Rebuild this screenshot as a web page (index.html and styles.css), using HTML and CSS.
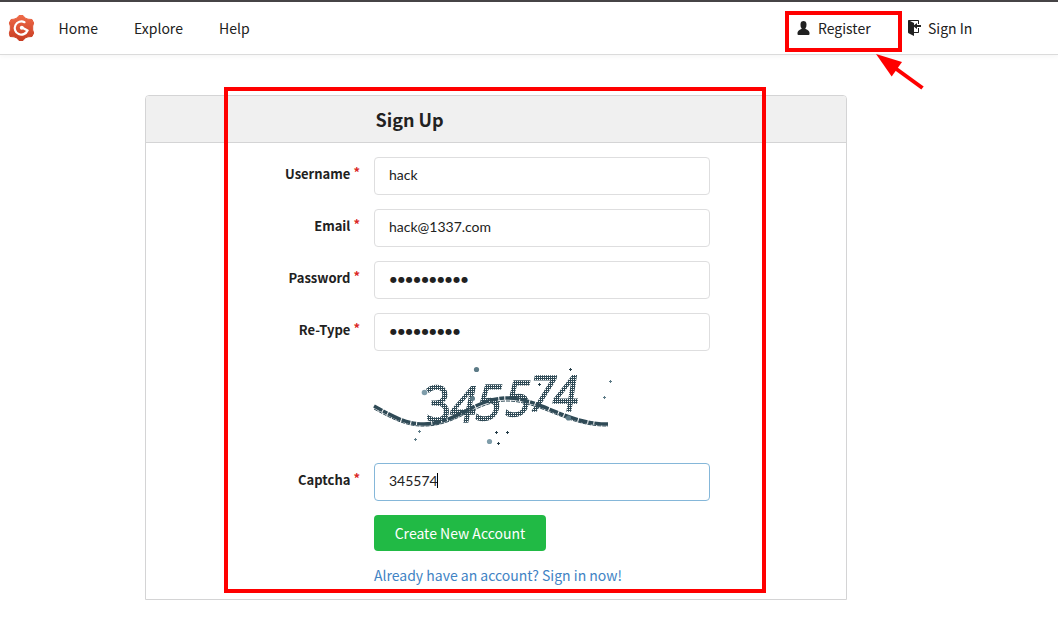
FILE: index.html
```html
<!DOCTYPE html>
<html lang="en">
<head>
<meta charset="utf-8">
<title>Sign Up</title>
<link rel="stylesheet" href="styles.css">
</head>
<body>
<nav class="navbar">
  <a class="brand">
    <svg width="27" height="28" viewBox="0 0 27 28">
      <defs><linearGradient id="g" x1="0" y1="0" x2="0" y2="1"><stop offset="0" stop-color="#ee6a48"/><stop offset="1" stop-color="#c83c22"/></linearGradient></defs>
      <path fill="url(#g)" stroke="url(#g)" stroke-linejoin="round" d="M11 1.500h4l2 2.500 3 1.200 4 .300 1.700 3.500-1 3v4l1 3-1.700 3.500-4 .300-3 1.200-2 2.500h-4l-2-2.500-3-1.200-4-.300L1.300 19l1-3v-4l-1-3L3 5.500l3-.300L9 4z"/>
      <path fill="none" stroke="#fff" stroke-width="2.200" stroke-linecap="round" d="M16.500 8.200a6.600 6.600 0 1 0 3 8.300l-5.500-3"/>
      <circle cx="13.800" cy="13.700" r="2" fill="#fff"/>
    </svg>
  </a>
  <a class="link home">Home</a>
  <a class="link explore">Explore</a>
  <a class="link">Help</a>
  <div class="account">
    <a class="link register"><svg class="icon" width="13" height="16" viewBox="0 0 12 16"><path d="M12 14.002a.998.998 0 01-.998.998H1.001A1 1 0 010 13.999V13c0-2.633 4-4 4-4s.229-.409 0-1c-.841-.62-.944-1.590-1-4 .173-2.413 1.867-3 3-3s2.827.586 3 3c-.056 2.410-.159 3.380-1 4-.229.590 0 1 0 1s4 1.367 4 4v1.002z"/></svg>Register</a>
    <a class="link"><svg class="icon" width="14" height="16" viewBox="0 0 14 16"><path d="M7 6.750V12h4V8h1v4c0 .550-.450 1-1 1H7v3l-5.450-2.720c-.330-.170-.550-.520-.550-.910V1c0-.550.450-1 1-1h9c.550 0 1 .450 1 1v3h-1V1H3l4 2v2.250L10 3v2h4v2h-4v2L7 6.750z"/></svg>Sign In</a>
  </div>
</nav>
<main class="card">
  <h1 class="title">Sign Up</h1>
  <form class="form">
    <label class="label">Username<span class="req">*</span></label><div class="input">hack</div>
    <label class="label">Email<span class="req">*</span></label><div class="input">hack@1337.com</div>
    <label class="label">Password<span class="req">*</span></label><div class="input dots">●●●●●●●●●●</div>
    <label class="label">Re-Type<span class="req">*</span></label><div class="input dots">●●●●●●●●●</div>
    <svg class="captcha" width="240" height="84" viewBox="374 365 240 84">
      <defs>
        <pattern id="mesh" width="2" height="2" patternUnits="userSpaceOnUse"><path fill="#fff" shape-rendering="crispEdges" d="M0 0h2v1H0zM0 1h1v1H0z"/></pattern>
        <mask id="holes" maskUnits="userSpaceOnUse" x="374" y="365" width="240" height="84"><rect x="374" y="365" width="240" height="84" fill="url(#mesh)"/></mask>
      </defs>
      <g class="digits" mask="url(#holes)">
        <text transform="translate(426 421) skewX(2) scale(.9 1)">3</text>
        <text transform="translate(448 422) skewX(-12) scale(.9 1)">4</text>
        <text transform="translate(473 420) skewX(-13) scale(.9 1)">5</text>
        <text transform="translate(503 416) skewX(-10) scale(.9 1)">5</text>
        <text transform="translate(526 411) skewX(-12) scale(.9 1)">7</text>
        <text transform="translate(551 411) skewX(-9) scale(.9 1)">4</text>
      </g>
      <g fill="none" stroke="#2f4a56">
        <path stroke-width="3.500" stroke-dasharray="9 1 5 1 14 1" d="M374 406C394 417 406 424 424 424C456 424 475 398 507 398C540 398 565 424 608 424"/>
        <path stroke-width="1" stroke-dasharray="4 1" d="M374 409C394 420 408 427 426 426C458 425 477 401 507 401C540 401 568 427 608 426"/>
      </g>
      <g fill="#5d7b87">
        <circle cx="476.500" cy="369.500" r="2.600"/><circle cx="568.500" cy="418" r="2.600"/><circle cx="472.500" cy="398.500" r="2.500"/>
        <circle cx="424.500" cy="392.500" r="2.800" fill="#7f9daa"/><circle cx="489.500" cy="441.500" r="2.600" fill="#7f9daa"/>
      </g>
      <g shape-rendering="crispEdges" stroke="#5d7b87">
        <path d="M418 431.500h3M419.500 430v3M414 439.500h3M415.500 438v3M609 381.500h3M610.500 380v3M603 397.500h3M604.500 396v3"/>
        <path stroke="#243c47" d="M495 432.500h3M496.500 431v3M506 432.500h3M507.500 431v3M497 443.500h3M498.500 442v3M569 369.500h3M570.500 368v3M538 384.500h3M539.500 383v3"/>
      </g>
    </svg>
    <label class="label">Captcha<span class="req">*</span></label><div class="input focus">345574<span class="caret"></span></div>
    <a class="button">Create New Account</a>
    <a class="signin">Already have an account? Sign in now!</a>
  </form>
</main>
<div class="mark mark-register"></div>
<div class="mark mark-form"></div>
<svg class="arrow" width="50" height="38" viewBox="875 52 50 38"><path fill="#f00" d="M876 54L902 62L891.700 76.500Z"/><path stroke="#f00" stroke-width="4" d="M895 68L922.500 88"/></svg>
</body>
</html>
```
FILE: styles.css
```css
* { box-sizing: border-box; }
body {
  margin: 0;
  height: 633px;
  overflow: hidden;
  background: #fff;
  color: #212121;
  font: 14px/20px "Noto Sans CJK SC", "Noto Sans", sans-serif;
}
.navbar {
  display: flex;
  align-items: center;
  height: 55px;
  padding-left: 8px;
  border-top: 2px solid #464446;
  border-bottom: 1px solid #dbdbdb;
  box-shadow: 0 2px 5px rgba(0, 0, 0, .04);
}
.brand { display: flex; width: 50.600px; }
.link { display: flex; align-items: center; white-space: nowrap; }
.home { width: 75.400px; }
.explore { width: 85px; }
.account { display: flex; margin-left: auto; width: 261px; }
.register { width: 110px; }
.icon { fill: #212121; margin-right: 8px; }
.account .link:last-child .icon { margin-right: 7px; }
.card {
  width: 702px;
  height: 505px;
  margin: 40px 0 0 145px;
  border: 1px solid #d4d4d5;
  border-radius: 4px 4px 0 0;
}
.title {
  margin: 0;
  height: 47px;
  padding-left: 229.500px;
  background: #f0f0f0;
  border-bottom: 1px solid #d4d4d5;
  border-radius: 3px 3px 0 0;
  font-size: 18px;
  line-height: 47px;
}
.form {
  display: grid;
  grid-template-columns: 214px 336px;
  column-gap: 14px;
  row-gap: 14px;
  padding-top: 14px;
}
.label {
  padding-top: 7px;
  text-align: right;
  font-size: 13px;
  font-weight: 700;
}
.req { color: #db2828; margin-left: 3px; position: relative; top: -2px; }
.input {
  display: flex;
  align-items: center;
  height: 38px;
  padding: 0 14px 3px;
  border: 1px solid #dededf;
  border-radius: 4px;
  font: 14px/17px Lato, sans-serif;
}
.dots { font: 8px/17px "DejaVu Sans", sans-serif; letter-spacing: .930px; padding-left: 15px; padding-bottom: 1px; }
.focus { border-color: #85b7d9; }
.caret { width: 1px; height: 15px; background: #000; margin-left: -1px; }
.captcha, .button, .signin { grid-column: 2; }
.captcha { overflow: visible; }
.digits text {
  font: 49px "Open Sans", sans-serif;
  fill: #2f4a56;
  stroke: #2f4a56;
  stroke-width: 1.600;
}
.button {
  width: 172px;
  height: 36px;
  border-radius: 4px;
  background: #21ba45;
  color: #fff;
  text-align: center;
  line-height: 36px;
}
.signin { color: #4183c4; white-space: nowrap; }
.mark { position: absolute; border: 4px solid #f00; }
.mark-register { left: 785px; top: 11px; width: 117px; height: 41px; }
.mark-form { left: 224px; top: 87px; width: 542px; height: 506px; }
.arrow { position: absolute; left: 875px; top: 52px; }
```
